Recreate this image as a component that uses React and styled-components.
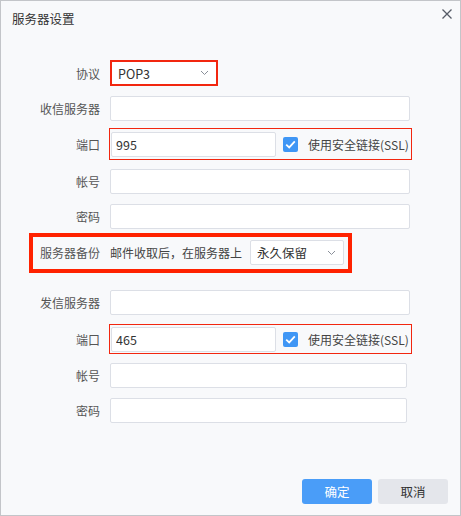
import styled, { createGlobalStyle } from "styled-components";

const GlobalStyle = createGlobalStyle`
	html, body {
		margin: 0;
		padding: 0;
		background: #ffffff;
	}
	* {
		box-sizing: border-box;
	}
`;

const fontStack = `"Noto Sans CJK SC", "Noto Sans", "Liberation Sans", sans-serif`;
const red = `#f2260f`;

function Chevron() {
	return (
		<svg width="9" height="6" viewBox="0 0 9 6">
			<path d="M1 1 L4.5 4.5 L8 1" fill="none" stroke="#8a8f99" strokeWidth="1" />
		</svg>
	);
}

function CheckIcon() {
	return (
		<svg width="11" height="9" viewBox="0 0 11 9">
			<path d="M1.2 4.6 L4.2 7.4 L9.8 1.4" fill="none" stroke="#ffffff" strokeWidth="1.8" />
		</svg>
	);
}

function SslCheck() {
	return (
		<CheckLabel>
			<CheckBox>
				<CheckIcon />
			</CheckBox>
			使用安全链接(SSL)
		</CheckLabel>
	);
}

function App() {
	return (
		<>
			<GlobalStyle />
			<Dialog>
				<Header>
					<Title>服务器设置</Title>
					<Close aria-label="close">
						<svg width="10" height="10" viewBox="0 0 10 10">
							<path d="M0.5 0.5 L9.5 9.5 M9.5 0.5 L0.5 9.5" stroke="#555b66" strokeWidth="1.3" />
						</svg>
					</Close>
				</Header>
				<Form>
					<Row $top={25}>
						<Label>协议</Label>
						<ProtocolMark>
							<Select $width={104}>
								<span>POP3</span>
								<Chevron />
							</Select>
						</ProtocolMark>
					</Row>
					<Row $top={10}>
						<Label>收信服务器</Label>
						<Input $width={300} />
					</Row>
					<Row $top={7}>
						<Label>端口</Label>
						<PortMark $padTop={3} $padBottom={2}>
							<Input $width={165} defaultValue="995" />
							<SslCheck />
						</PortMark>
					</Row>
					<Row $top={9}>
						<Label>帐号</Label>
						<Input $width={300} />
					</Row>
					<Row $top={10}>
						<Label>密码</Label>
						<Input $width={300} type="password" />
					</Row>
					<BackupMark>
						<BackupLabel>服务器备份</BackupLabel>
						<Hint>邮件收取后，在服务器上</Hint>
						<Select $width={94} $bordered>
							<span>永久保留</span>
							<Chevron />
						</Select>
					</BackupMark>
					<Row $top={17}>
						<Label>发信服务器</Label>
						<Input $width={300} />
					</Row>
					<Row $top={9}>
						<Label>端口</Label>
						<PortMark $padTop={2} $padBottom={1}>
							<Input $width={165} defaultValue="465" />
							<SslCheck />
						</PortMark>
					</Row>
					<Row $top={9}>
						<Label>帐号</Label>
						<Input $width={297} />
					</Row>
					<Row $top={10}>
						<Label>密码</Label>
						<Input $width={297} type="password" />
					</Row>
				</Form>
				<Footer>
					<Button $primary>确定</Button>
					<Button>取消</Button>
				</Footer>
			</Dialog>
		</>
	);
}

const Dialog = styled.div`
	width: 461px;
	height: 516px;
	border: 1px solid #c3c5c9;
	background-color: #f8f9fb;
	font-family: ${fontStack};
	font-size: 12px;
	line-height: 17px;
	color: #333;
	display: flex;
	flex-direction: column;
`;

const Header = styled.div`
	height: 34px;
	padding-left: 11px;
	padding-right: 8px;
	display: flex;
	align-items: center;
	justify-content: space-between;
`;

const Title = styled.div`
	font-size: 12.5px;
	color: #333;
`;

const Close = styled.div`
	width: 10px;
	height: 10px;
	margin-top: -8px;
	display: flex;
`;

const Form = styled.div`
	display: flex;
	flex-direction: column;
`;

const Row = styled.div`
	margin-top: ${(p) => p.$top}px;
	display: grid;
	grid-template-columns: 99px auto;
	column-gap: 10px;
	align-items: center;
	justify-content: start;
`;

const Label = styled.div`
	text-align: right;
	color: #555;
	white-space: nowrap;
`;

const Input = styled.input`
	width: ${(p) => p.$width}px;
	height: 25px;
	border: 1px solid #dcdfe6;
	border-radius: 2px;
	background: #ffffff;
	padding: 0 4px;
	font-family: ${fontStack};
	font-size: 12.5px;
	color: #333;
	outline: none;
`;

const Select = styled.div`
	width: ${(p) => p.$width}px;
	height: ${(p) => (p.$bordered ? 25 : 22)}px;
	border: ${(p) => (p.$bordered ? "1px solid #dcdfe6" : "none")};
	border-radius: 2px;
	background: #ffffff;
	padding: 0 7px 0 6px;
	display: flex;
	align-items: center;
	justify-content: space-between;
	font-size: 12.5px;
	color: #333;
`;

const ProtocolMark = styled.div`
	width: 108px;
	border: 2px solid ${red};
	display: flex;
`;

const PortMark = styled.div`
	margin-left: -1px;
	width: 303px;
	border: 1px solid ${red};
	padding: ${(p) => p.$padTop}px 0 ${(p) => p.$padBottom}px 1px;
	display: flex;
	align-items: center;
`;

const CheckLabel = styled.label`
	margin-left: 7px;
	display: flex;
	align-items: center;
	gap: 10px;
	color: #444;
	white-space: nowrap;
`;

const CheckBox = styled.span`
	width: 15px;
	height: 15px;
	border-radius: 2px;
	background-color: #3f96f5;
	display: flex;
	align-items: center;
	justify-content: center;
`;

const BackupMark = styled.div`
	margin-top: 4px;
	margin-left: 28px;
	width: 323px;
	border: 4px solid #ff2200;
	padding: 3px 4px 4px 0;
	display: flex;
	align-items: center;
`;

const BackupLabel = styled.div`
	width: 67px;
	text-align: right;
	color: #555;
	white-space: nowrap;
`;

const Hint = styled.div`
	margin-left: 10px;
	margin-right: 8px;
	color: #444;
	white-space: nowrap;
`;

const Footer = styled.div`
	margin-top: auto;
	padding: 0 12px 11px 0;
	display: flex;
	justify-content: flex-end;
	gap: 6px;
`;

const Button = styled.button`
	width: 70px;
	height: 25px;
	border: none;
	border-radius: 3px;
	background-color: ${(p) => (p.$primary ? "#4a9df8" : "#e4e6eb")};
	color: ${(p) => (p.$primary ? "#ffffff" : "#333")};
	font-family: ${fontStack};
	font-size: 12.5px;
	cursor: pointer;
`;

export default App;
